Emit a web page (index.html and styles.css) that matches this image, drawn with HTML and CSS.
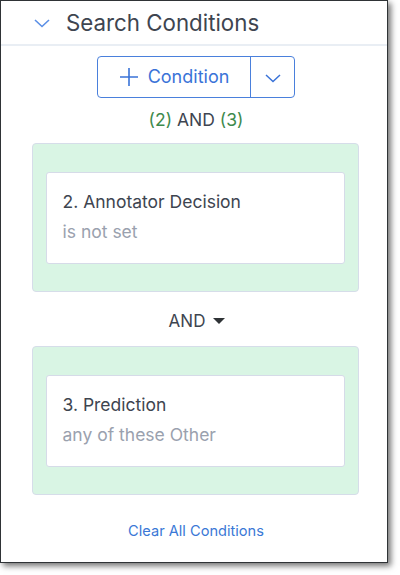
FILE: index.html
```html
<!DOCTYPE html>
<html>
<head>
<meta charset="utf-8">
<link rel="stylesheet" href="styles.css">
</head>
<body>
<div class="frame">
  <div class="header">
    <svg class="chev" width="16" height="9" viewBox="0 0 16 9"><path d="M1 1 L8 7.5 L15 1" fill="none" stroke="#5b8fe6" stroke-width="1.6"/></svg>
    <span class="title">Search Conditions</span>
  </div>
  <div class="content">
    <div class="btn-group">
      <div class="btn-main">
        <svg width="20" height="20" viewBox="0 0 20 20"><path d="M10 1 V19 M1 10 H19" stroke="#3a73d8" stroke-width="1.6" fill="none"/></svg>
        <span>Condition</span>
      </div>
      <div class="btn-drop">
        <svg width="16" height="9" viewBox="0 0 16 9"><path d="M1 1 L8 7.5 L15 1" fill="none" stroke="#3a73d8" stroke-width="1.5"/></svg>
      </div>
    </div>
    <div class="expr"><span class="g">(2)</span> AND <span class="g">(3)</span></div>
    <div class="group">
      <div class="card">
        <div class="card-title">2. Annotator Decision</div>
        <div class="card-sub">is not set</div>
      </div>
    </div>
    <div class="op">AND <span class="caret"></span></div>
    <div class="group">
      <div class="card">
        <div class="card-title">3. Prediction</div>
        <div class="card-sub">any of these Other</div>
      </div>
    </div>
    <div class="clear">Clear All Conditions</div>
  </div>
</div>
</body>
</html>
```
FILE: styles.css
```css
html, body {
  margin: 0;
  padding: 0;
  background: #fff;
}
body {
  font-family: Inter, Roboto, "Liberation Sans", sans-serif;
  width: 400px;
  height: 575px;
  overflow: hidden;
}
.frame {
  box-sizing: border-box;
  width: 388px;
  height: 563px;
  border: 1.5px solid #2f3336;
  background: #fff;
  box-shadow: 3px 3px 6px rgba(0,0,0,0.55);
}
.header {
  height: 43px;
  border-bottom: 2px solid #e9eef4;
  display: flex;
  align-items: center;
  padding-left: 33px;
}
.chev { margin-top: 2px; }
.title {
  margin-left: 16px;
  font-size: 22.3px;
  color: #3e4550;
  margin-top: -1px;
}
.content {
  display: flex;
  flex-direction: column;
  align-items: center;
}
.btn-group {
  margin-top: 10px;
  display: flex;
  height: 42px;
  box-sizing: border-box;
  border: 1px solid #4a80dc;
  border-radius: 4px;
  margin-left: 4px;
}
.btn-main {
  width: 152px;
  display: flex;
  align-items: center;
  justify-content: center;
  gap: 9px;
  border-right: 1px solid #4a80dc;
  color: #3a73d8;
  font-size: 18px;
}
.btn-main span { margin-top: -1px; }
.btn-drop {
  width: 43px;
  display: flex;
  align-items: center;
  justify-content: center;
  padding-top: 3px;
}
.expr {
  margin-top: 12px;
  font-size: 17.5px;
  line-height: 20px;
  color: #3e4550;
  margin-left: 4px;
}
.g { color: #3e8a4d; }
.group {
  box-sizing: border-box;
  width: 327px;
  height: 149px;
  margin-top: 13px;
  background: #d9f5e4;
  border: 1px solid #d6dde9;
  border-radius: 4px;
  padding: 28px 13px;
  margin-left: 2px;
}
.card {
  box-sizing: border-box;
  height: 92px;
  background: #fff;
  border: 1px solid #d6dbe8;
  border-radius: 3px;
  padding: 18px 16px 0;
}
.card-title {
  font-size: 17.5px;
  color: #3e4550;
  line-height: 22px;
}
.card-sub {
  margin-top: 9px;
  font-size: 17.5px;
  color: #9aa1ae;
  line-height: 20px;
}
.op {
  margin-top: 19px;
  height: 35px;
  font-size: 17px;
  line-height: 20px;
  color: #3e4550;
  display: flex;
  align-items: flex-start;
  gap: 8px;
  margin-left: 6px;
}
.caret {
  display: inline-block;
  width: 0;
  height: 0;
  border-left: 6px solid transparent;
  border-right: 6px solid transparent;
  border-top: 6px solid #2f3336;
  margin-top: 7px;
}
.op + .group { margin-top: 0; }
.clear {
  margin-top: 27px;
  font-size: 14.6px;
  color: #3a78d6;
  margin-left: 4px;
}
```
